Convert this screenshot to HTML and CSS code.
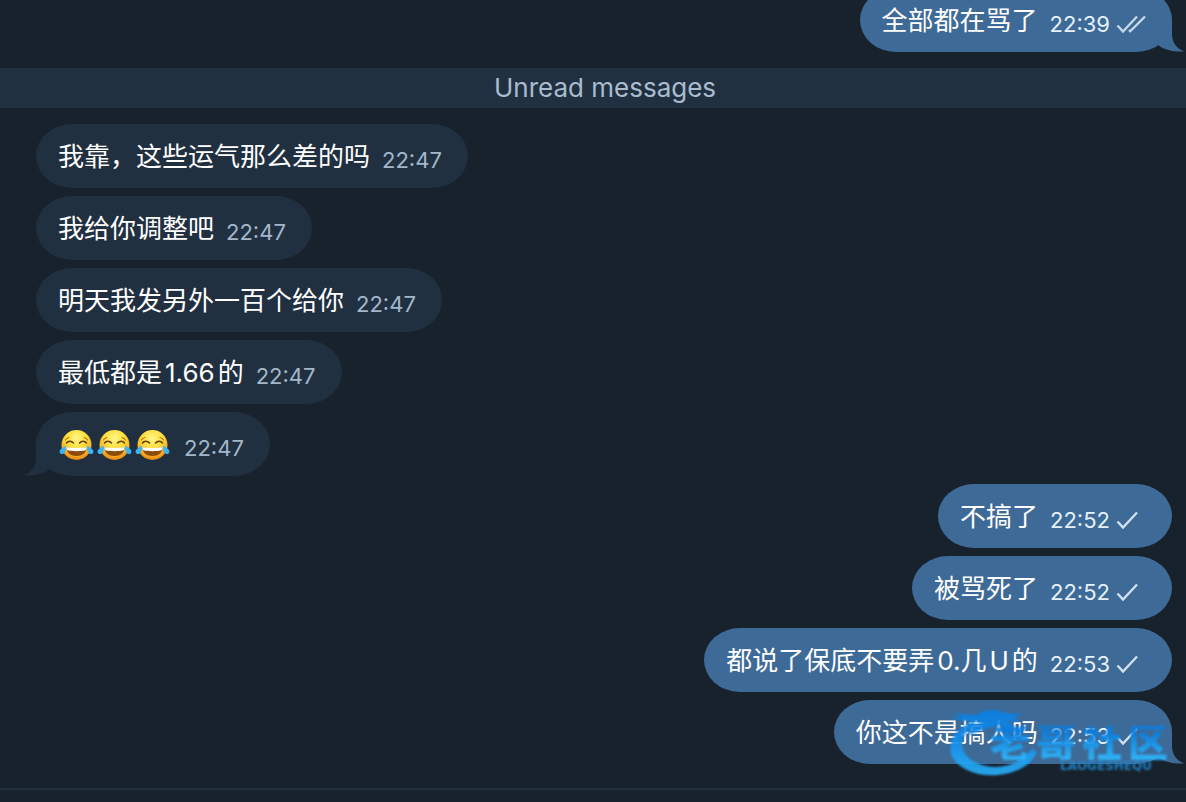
FILE: index.html
```html
<!DOCTYPE html>
<html lang="zh-CN">
<head>
<meta charset="utf-8">
<title>Chat</title>
<meta name="viewport" content="width=device-width, initial-scale=1">
<link rel="stylesheet" href="styles.css">
</head>
<body>
<svg class="defs" aria-hidden="true">
  <defs>
    <radialGradient id="face" cx="50%" cy="28%" r="74%">
      <stop offset="0" stop-color="#fff68a"/><stop offset=".45" stop-color="#fede3c"/><stop offset=".8" stop-color="#f8a820"/><stop offset="1" stop-color="#e07c10"/>
    </radialGradient>
    <linearGradient id="brand" gradientUnits="userSpaceOnUse" x1="0" y1="0" x2="0" y2="70">
      <stop offset="0" stop-color="#0a7fe0"/><stop offset=".4" stop-color="#128bea"/><stop offset="1" stop-color="#2cb4fb"/>
    </linearGradient>
    <symbol id="joy" viewBox="0 0 38 32">
      <circle cx="18.500" cy="16" r="15" fill="url(#face)"/>
      <path d="M8.500 14c1.500-2.500 5-2.500 7 0M21.500 14c2-2.500 5.500-2.500 7 0" fill="none" stroke="#6d3b06" stroke-width="1.500" stroke-linecap="round"/>
      <path d="M7.500 11c.8-1.500 2-2.200 3.500-2.500M29.500 11c-.8-1.500-2-2.200-3.500-2.500" fill="none" stroke="#b5700f" stroke-width="1.100" stroke-linecap="round"/>
      <path d="M8.500 18.500c6.500 1 13.500 1 20 0 0 5-4 8.500-10 8.500s-10-3.500-10-8.500z" fill="#8a4c08"/>
      <path d="M8.500 18.300c6.500 1 13.500 1 20 0 0 1.500-.3 2.300-1 3-5 1.200-13 1.200-18 0-.7-.7-1-1.500-1-3z" fill="#fff"/>
      <path d="M7.500 16.500c1 4-.2 8-3 8.500-3 .4-3.800-3-1.800-4.800z" fill="#39b4f5"/>
      <path d="M29.500 16.500c-1 4 .2 8 3 8.500 3 .4 3.800-3 1.800-4.800z" fill="#39b4f5"/>
    </symbol>
    <symbol id="sent" viewBox="0 0 30 20">
      <path d="M1.500 11.500 7 17.500 21 2.500" fill="none" stroke="#d3e2ef" stroke-width="2.300"/>
    </symbol>
    <symbol id="read" viewBox="0 0 30 20">
      <path d="M1.500 11.500 7 17.500 21 2.500M13 16l2 2M14 17.500 29 2.500" fill="none" stroke="#c6d9e9" stroke-width="2.300"/>
    </symbol>
    <symbol id="tail" viewBox="0 0 32 32">
      <path d="M20 0V14C20 22 24 28 32 31.500 22 32 12 30 6 25L0 10Z" fill="currentColor"/>
    </symbol>
  </defs>
</svg>
<main class="chat">
  <section class="group">
    <article class="bubble out"><p class="text">全部都在骂了</p><time class="time">22:39</time><svg class="status" role="img" aria-label="Read"><use href="#read"/></svg><svg class="tail" aria-hidden="true"><use href="#tail"/></svg></article>
  </section>
  <h2 class="divider">Unread messages</h2>
  <section class="group">
    <article class="bubble in"><p class="text">我靠，这些运气那么差的吗</p><time class="time">22:47</time></article>
    <article class="bubble in"><p class="text">我给你调整吧</p><time class="time">22:47</time></article>
    <article class="bubble in"><p class="text">明天我发另外一百个给你</p><time class="time">22:47</time></article>
    <article class="bubble in"><p class="text">最低都是<span class="latin">1.66</span>的</p><time class="time">22:47</time></article>
    <article class="bubble in"><p class="text emojis"><svg class="emoji" role="img" aria-label="😂"><use href="#joy"/></svg><svg class="emoji" role="img" aria-label="😂"><use href="#joy"/></svg><svg class="emoji" role="img" aria-label="😂"><use href="#joy"/></svg></p><time class="time">22:47</time><svg class="tail" aria-hidden="true"><use href="#tail"/></svg></article>
    <article class="bubble out"><p class="text">不搞了</p><time class="time">22:52</time><svg class="status" role="img" aria-label="Sent"><use href="#sent"/></svg></article>
    <article class="bubble out"><p class="text">被骂死了</p><time class="time">22:52</time><svg class="status" role="img" aria-label="Sent"><use href="#sent"/></svg></article>
    <article class="bubble out"><p class="text">都说了保底不要弄<span class="latin-start">0.</span>几<span class="latin">U</span>的</p><time class="time">22:53</time><svg class="status" role="img" aria-label="Sent"><use href="#sent"/></svg></article>
    <article class="bubble out"><p class="text">你这不是搞人吗</p><time class="time">22:53</time><svg class="status" role="img" aria-label="Sent"><use href="#sent"/></svg><svg class="tail" aria-hidden="true"><use href="#tail"/></svg>
      <div class="watermark">
        <svg class="emblem" viewBox="0 0 96 70" aria-hidden="true">
          <path fill="url(#brand)" d="M24 13C6 20 0 34 3 45 8 59 28 68 50 66 70 64 84 55 89 43L84 40C76 51 62 58 47 58 28 57 15 48 14 36 13 28 18 21 30 17Z"/>
          <path fill="url(#brand)" d="M0 2C10 6 18 5 28 6 36 0 48 0 56 3 62 6 68 4 74 5L66 9 72 12 58 13C66 16 70 19 66 21 56 14 44 17 38 20L20 26C22 20 28 15 34 13 22 13 10 11 2 8L14 8Z"/>
        </svg>
        <div class="brand">
          <div class="brand-name"><span>老</span><span>哥</span><span>社</span><span>区</span></div>
          <span class="brand-latin">LAOGESHEQU</span>
        </div>
      </div>
    </article>
  </section>
  <footer class="composer"></footer>
</main>
</body>
</html>
```
FILE: styles.css
```css
* { box-sizing: border-box; }
body {
  margin: 0;
  background: #18222c;
  color: #fff;
  font-family: Inter, "Noto Sans CJK SC", sans-serif;
}
.defs { position: absolute; width: 0; height: 0; }
.chat {
  display: flex;
  flex-direction: column;
  min-height: 100vh;
  overflow: hidden;
}
.group {
  display: flex;
  flex-direction: column;
  gap: 8px;
  padding: 0 14px 0 36px;
}
.group:first-child { margin-top: -12px; }
.divider {
  margin: 16px 0;
  padding-left: 24px;
  background: #213040;
  color: #a9bccf;
  font-size: 26px;
  font-weight: 400;
  line-height: 40px;
  text-align: center;
}
.bubble {
  position: relative;
  display: flex;
  align-items: flex-end;
  padding: 17px 26px 15px 22px;
  border-radius: 36px / 32px;
}
.in { align-self: flex-start; background: #213040; color: #213040; }
.out { align-self: flex-end; background: #3e6a97; color: #3e6a97; }
.text {
  margin: 0 12px 0 0;
  color: #fff;
  font-size: 26px;
  line-height: 32px;
}
.latin { margin: 0 3px; }
.latin-start { margin-left: 3px; }
.time { color: #a3b7ca; font-size: 22px; line-height: 26px; }
.out .time { color: #e6f1fa; }
.status { width: 30px; height: 20px; margin: 0 0 3px 6px; }
.emojis { display: flex; }
.emoji { width: 38px; height: 32px; }
.tail {
  position: absolute;
  right: -12px;
  bottom: 0;
  width: 32px;
  height: 32px;
}
.in .tail { right: auto; left: -12px; transform: scaleX(-1); }
.watermark {
  position: absolute;
  top: 9px;
  right: 0;
  width: 224px;
  height: 70px;
  opacity: .92;
  filter: blur(1px);
}
.emblem { position: absolute; left: 0; top: 0; width: 96px; height: 70px; }
.brand {
  position: absolute;
  top: 17px;
  right: 4px;
  display: flex;
  flex-direction: column;
  align-items: flex-end;
}
.brand-name {
  display: flex;
  gap: 6px;
  background: linear-gradient(#0a7fe0 20%, #2cb4fb 90%);
  background-clip: text;
  color: transparent;
  font-size: 40px;
  font-weight: 900;
  line-height: 34px;
}
.brand-latin {
  margin-right: 16px;
  color: #1f86cc;
  font-family: "DejaVu Sans", sans-serif;
  font-size: 12px;
  font-weight: 700;
  line-height: 12px;
}
.composer { margin-top: 24px; border-top: 2px solid #213040; }
```
